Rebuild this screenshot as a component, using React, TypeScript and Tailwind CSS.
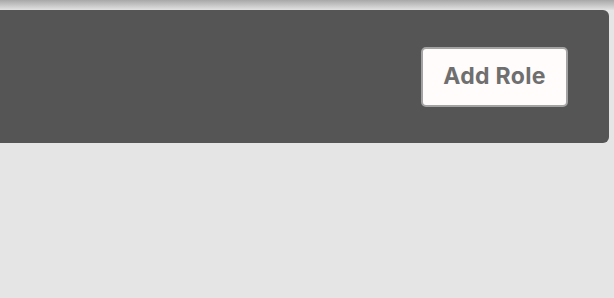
export default function App() {
  return (
    <div className="w-[614px] h-[298px] bg-[#e5e5e5] overflow-hidden" style={{ fontFamily: 'Inter, "Liberation Sans", sans-serif' }}>
      <div className="h-[10px] bg-gradient-to-b from-[#a8a8a8] to-[#e2e2e2]" />
      <div className="mr-[5px] h-[133px] bg-[#555555] rounded-r-[6px] flex items-center justify-end pr-[41px]">
        <button className="h-[60px] w-[147px] rounded-[5px] border-2 border-[#a3a3a3] bg-[#fffcfb] text-[#6f6f6f] text-[23px] font-bold tracking-[0.3px]">
          Add Role
        </button>
      </div>
    </div>
  );
}
